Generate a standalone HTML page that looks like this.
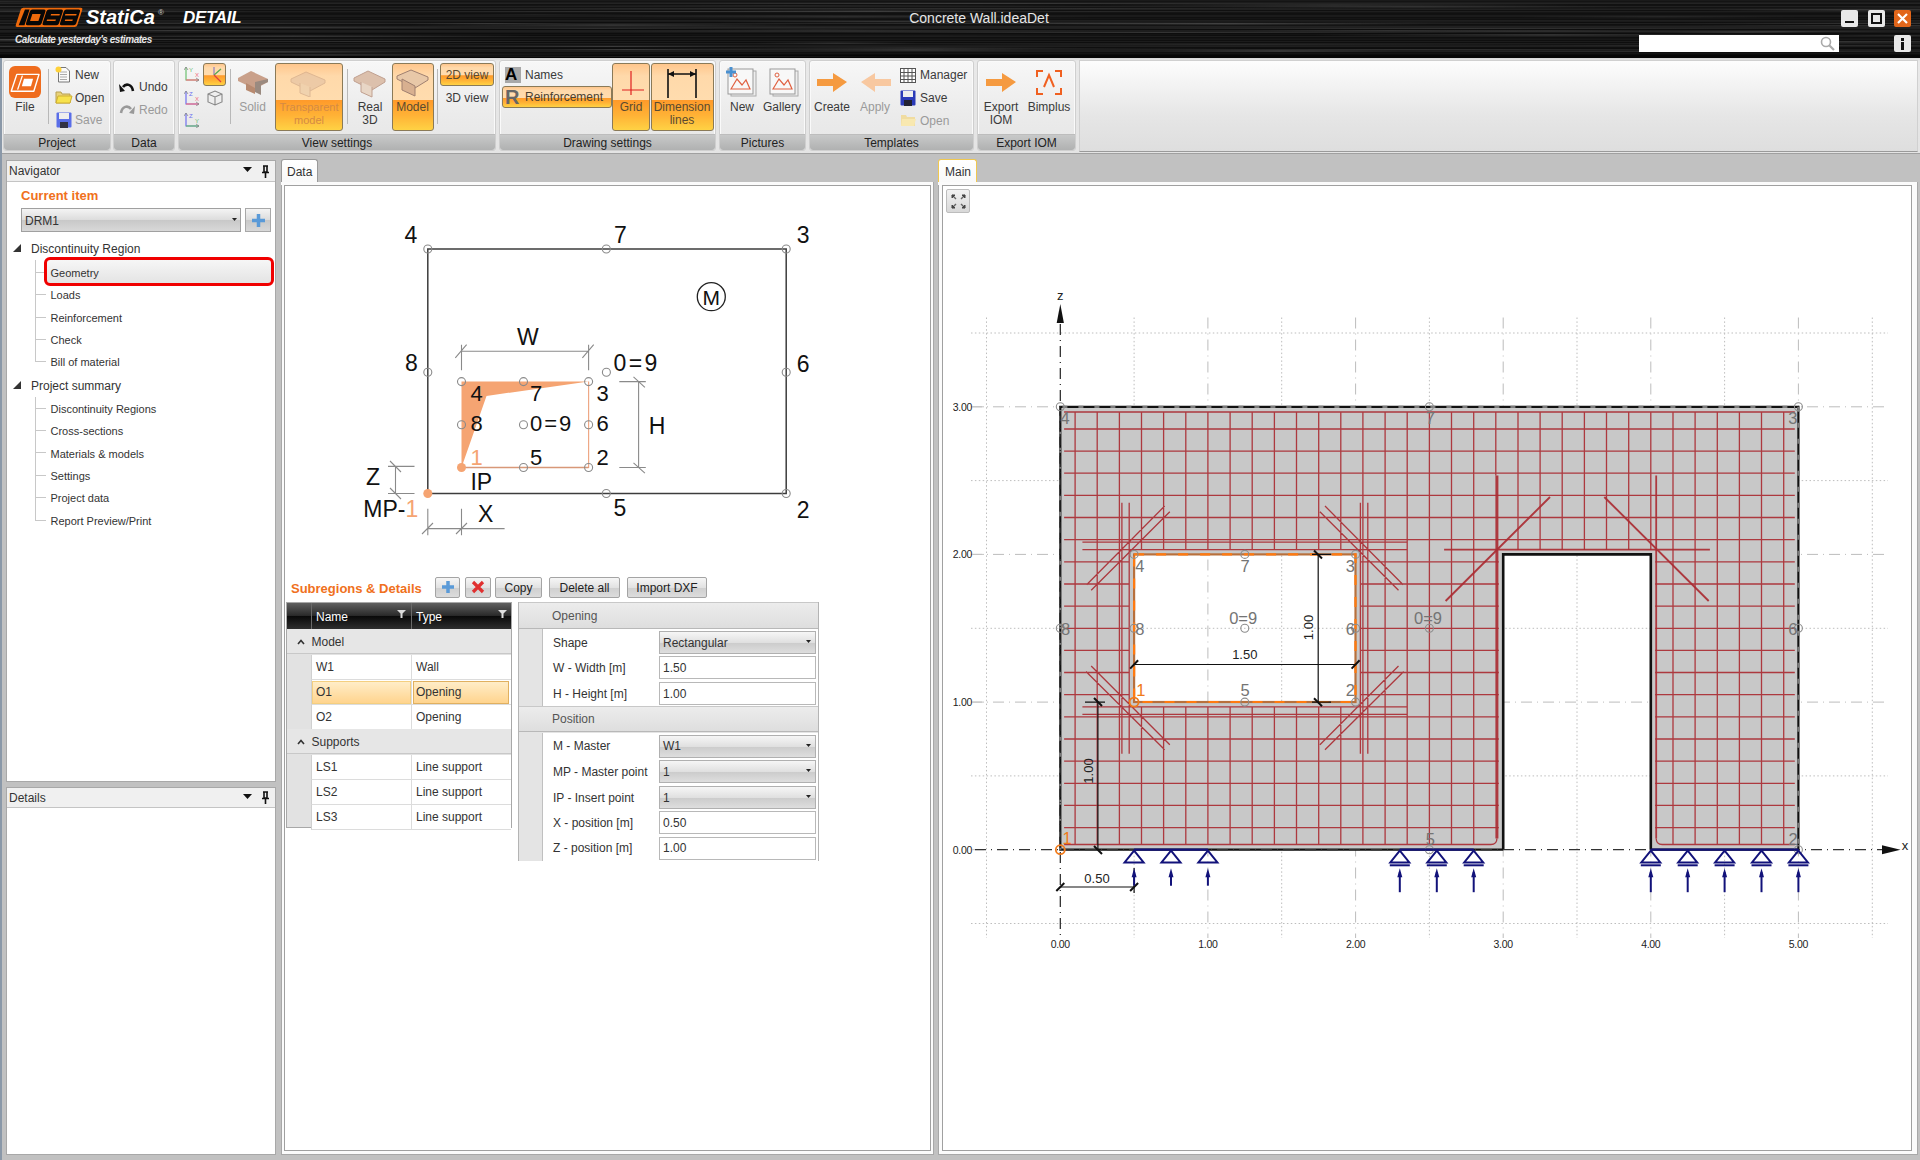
<!DOCTYPE html>
<html><head><meta charset="utf-8">
<style>
*{margin:0;padding:0;box-sizing:border-box}
html,body{width:1920px;height:1160px;overflow:hidden;background:#c1c1c1;font-family:"Liberation Sans",sans-serif;color:#1e1e1e}
.a{position:absolute}
.t{position:absolute;white-space:nowrap;line-height:1}
#title{left:0;top:0;width:1920px;height:58px;background:#070707;overflow:hidden}
#ribbon{left:0;top:58px;width:1920px;height:96px;background:linear-gradient(#d6d6d6,#e9e9e9 3px,#e4e4e4);border-bottom:1px solid #a0a0a0}
.grp{position:absolute;top:60px;height:91px;background:linear-gradient(#f7f7f7,#ebebeb 60%,#e6e6e6);border:1px solid #cfcfcf;border-radius:3px;box-shadow:inset 0 0 0 1px #fafafa}
.glab{position:absolute;left:0;right:0;bottom:0;height:16px;background:linear-gradient(#c8c9c9,#b0b1b1);border-top:1px solid #bdbdbd;font-size:12px;text-align:center;line-height:16px;color:#222;border-radius:0 0 3px 3px}
.obtn{position:absolute;background:linear-gradient(#ffc68c 0%,#ffd9aa 18%,#ffdcae 54%,#ff9a2a 55%,#ffb236 78%,#ffd244 100%);border:1px solid #8a7a58;border-radius:3px}
.rt{font-size:12px;color:#1e1e1e}
.gr{color:#9a9a9a}
.sep{position:absolute;width:1px;background:#b8b8b8}
.panel{position:absolute;background:#fff;border:1px solid #9c9c9c}
.phdr{position:absolute;background:#f0f0f0;border-bottom:1px solid #b5b5b5;font-size:12px}
</style></head><body>

<div id="title" class="a" style="background:linear-gradient(rgb(26,26,26) 0px 1px,rgb(20,20,20) 1px 2px,rgb(28,28,28) 2px 3px,rgb(36,36,36) 3px 4px,rgb(17,17,17) 4px 5px,rgb(18,18,18) 5px 6px,rgb(33,33,33) 6px 7px,rgb(19,19,19) 7px 8px,rgb(26,26,26) 8px 9px,rgb(33,33,33) 9px 10px,rgb(16,16,16) 10px 11px,rgb(31,31,31) 11px 12px,rgb(21,21,21) 12px 13px,rgb(16,16,16) 13px 14px,rgb(17,17,17) 14px 15px,rgb(27,27,27) 15px 16px,rgb(27,27,27) 16px 17px,rgb(16,16,16) 17px 18px,rgb(21,21,21) 18px 19px,rgb(16,16,16) 19px 20px,rgb(31,31,31) 20px 21px,rgb(27,27,27) 21px 22px,rgb(14,14,14) 22px 23px,rgb(31,31,31) 23px 24px,rgb(16,16,16) 24px 25px,rgb(20,20,20) 25px 26px,rgb(33,33,33) 26px 27px,rgb(33,33,33) 27px 28px,rgb(31,31,31) 28px 29px,rgb(13,13,13) 29px 30px,rgb(30,30,30) 30px 31px,rgb(30,30,30) 31px 32px,rgb(24,24,24) 32px 33px,rgb(13,13,13) 33px 34px,rgb(19,19,19) 34px 35px,rgb(13,13,13) 35px 36px,rgb(29,29,29) 36px 37px,rgb(15,15,15) 37px 38px,rgb(20,20,20) 38px 39px,rgb(24,24,24) 39px 40px,rgb(15,15,15) 40px 41px,rgb(28,28,28) 41px 42px,rgb(14,14,14) 42px 43px,rgb(29,29,29) 43px 44px,rgb(19,19,19) 44px 45px,rgb(27,27,27) 45px 46px,rgb(31,31,31) 46px 47px,rgb(15,15,15) 47px 48px,rgb(13,13,13) 48px 49px,rgb(28,28,28) 49px 50px,rgb(28,28,28) 50px 51px,rgb(29,29,29) 51px 52px,rgb(15,15,15) 52px 53px,rgb(20,20,20) 53px 54px,rgb(12,12,12) 54px 55px,rgb(6,6,6) 55px 56px,rgb(6,6,6) 56px 57px,rgb(6,6,6) 57px 58px)">
<div class="a" style="left:643px;top:3px;width:658px;height:1px;background:linear-gradient(90deg,rgba(255,255,255,0),rgba(255,255,255,0.10) 50%,rgba(255,255,255,0))"></div>
<div class="a" style="left:1086px;top:49px;width:626px;height:1px;background:linear-gradient(90deg,rgba(255,255,255,0),rgba(255,255,255,0.09) 50%,rgba(255,255,255,0))"></div>
<div class="a" style="left:1027px;top:23px;width:404px;height:2px;background:linear-gradient(90deg,rgba(255,255,255,0),rgba(255,255,255,0.11) 50%,rgba(255,255,255,0))"></div>
<div class="a" style="left:799px;top:49px;width:233px;height:2px;background:linear-gradient(90deg,rgba(255,255,255,0),rgba(255,255,255,0.09) 50%,rgba(255,255,255,0))"></div>
<div class="a" style="left:1206px;top:31px;width:609px;height:1px;background:linear-gradient(90deg,rgba(255,255,255,0),rgba(255,255,255,0.07) 50%,rgba(255,255,255,0))"></div>
<div class="a" style="left:1896px;top:7px;width:578px;height:1px;background:linear-gradient(90deg,rgba(255,255,255,0),rgba(255,255,255,0.05) 50%,rgba(255,255,255,0))"></div>
<div class="a" style="left:1802px;top:9px;width:581px;height:2px;background:linear-gradient(90deg,rgba(255,255,255,0),rgba(255,255,255,0.04) 50%,rgba(255,255,255,0))"></div>
<div class="a" style="left:1085px;top:4px;width:498px;height:2px;background:linear-gradient(90deg,rgba(255,255,255,0),rgba(255,255,255,0.10) 50%,rgba(255,255,255,0))"></div>
<div class="a" style="left:1668px;top:31px;width:220px;height:1px;background:linear-gradient(90deg,rgba(255,255,255,0),rgba(255,255,255,0.12) 50%,rgba(255,255,255,0))"></div>
<div class="a" style="left:66px;top:30px;width:212px;height:1px;background:linear-gradient(90deg,rgba(255,255,255,0),rgba(255,255,255,0.11) 50%,rgba(255,255,255,0))"></div>
<div class="a" style="left:1625px;top:41px;width:441px;height:2px;background:linear-gradient(90deg,rgba(255,255,255,0),rgba(255,255,255,0.10) 50%,rgba(255,255,255,0))"></div>
<div class="a" style="left:-108px;top:22px;width:622px;height:2px;background:linear-gradient(90deg,rgba(255,255,255,0),rgba(255,255,255,0.07) 50%,rgba(255,255,255,0))"></div>
<div class="a" style="left:1822px;top:7px;width:210px;height:1px;background:linear-gradient(90deg,rgba(255,255,255,0),rgba(255,255,255,0.06) 50%,rgba(255,255,255,0))"></div>
<div class="a" style="left:814px;top:8px;width:557px;height:1px;background:linear-gradient(90deg,rgba(255,255,255,0),rgba(255,255,255,0.08) 50%,rgba(255,255,255,0))"></div>
<div class="a" style="left:481px;top:5px;width:609px;height:1px;background:linear-gradient(90deg,rgba(255,255,255,0),rgba(255,255,255,0.08) 50%,rgba(255,255,255,0))"></div>
<div class="a" style="left:360px;top:56px;width:590px;height:1px;background:linear-gradient(90deg,rgba(255,255,255,0),rgba(255,255,255,0.12) 50%,rgba(255,255,255,0))"></div>
<div class="a" style="left:1501px;top:45px;width:517px;height:1px;background:linear-gradient(90deg,rgba(255,255,255,0),rgba(255,255,255,0.10) 50%,rgba(255,255,255,0))"></div>
<div class="a" style="left:418px;top:14px;width:234px;height:1px;background:linear-gradient(90deg,rgba(255,255,255,0),rgba(255,255,255,0.06) 50%,rgba(255,255,255,0))"></div>
<div class="a" style="left:755px;top:42px;width:162px;height:2px;background:linear-gradient(90deg,rgba(255,255,255,0),rgba(255,255,255,0.08) 50%,rgba(255,255,255,0))"></div>
<div class="a" style="left:876px;top:11px;width:438px;height:1px;background:linear-gradient(90deg,rgba(255,255,255,0),rgba(255,255,255,0.04) 50%,rgba(255,255,255,0))"></div>
<div class="a" style="left:1312px;top:34px;width:476px;height:2px;background:linear-gradient(90deg,rgba(255,255,255,0),rgba(255,255,255,0.13) 50%,rgba(255,255,255,0))"></div>
<div class="a" style="left:21px;top:54px;width:617px;height:2px;background:linear-gradient(90deg,rgba(255,255,255,0),rgba(255,255,255,0.12) 50%,rgba(255,255,255,0))"></div>
<div class="a" style="left:1407px;top:51px;width:557px;height:1px;background:linear-gradient(90deg,rgba(255,255,255,0),rgba(255,255,255,0.08) 50%,rgba(255,255,255,0))"></div>
<div class="a" style="left:1440px;top:30px;width:213px;height:1px;background:linear-gradient(90deg,rgba(255,255,255,0),rgba(255,255,255,0.06) 50%,rgba(255,255,255,0))"></div>
<div class="a" style="left:464px;top:28px;width:262px;height:1px;background:linear-gradient(90deg,rgba(255,255,255,0),rgba(255,255,255,0.07) 50%,rgba(255,255,255,0))"></div>
<div class="a" style="left:-200px;top:6px;width:304px;height:1px;background:linear-gradient(90deg,rgba(255,255,255,0),rgba(255,255,255,0.09) 50%,rgba(255,255,255,0))"></div>
<div class="a" style="left:-96px;top:39px;width:222px;height:2px;background:linear-gradient(90deg,rgba(255,255,255,0),rgba(255,255,255,0.12) 50%,rgba(255,255,255,0))"></div>
<div class="a" style="left:408px;top:24px;width:408px;height:2px;background:linear-gradient(90deg,rgba(255,255,255,0),rgba(255,255,255,0.13) 50%,rgba(255,255,255,0))"></div>
<div class="a" style="left:1742px;top:23px;width:275px;height:1px;background:linear-gradient(90deg,rgba(255,255,255,0),rgba(255,255,255,0.05) 50%,rgba(255,255,255,0))"></div>
<div class="a" style="left:1767px;top:29px;width:645px;height:1px;background:linear-gradient(90deg,rgba(255,255,255,0),rgba(255,255,255,0.07) 50%,rgba(255,255,255,0))"></div>
<div class="a" style="left:1203px;top:6px;width:421px;height:2px;background:linear-gradient(90deg,rgba(255,255,255,0),rgba(255,255,255,0.08) 50%,rgba(255,255,255,0))"></div>
<div class="a" style="left:-106px;top:10px;width:360px;height:2px;background:linear-gradient(90deg,rgba(255,255,255,0),rgba(255,255,255,0.13) 50%,rgba(255,255,255,0))"></div>
<div class="a" style="left:400px;top:23px;width:177px;height:1px;background:linear-gradient(90deg,rgba(255,255,255,0),rgba(255,255,255,0.11) 50%,rgba(255,255,255,0))"></div>
<div class="a" style="left:172px;top:41px;width:417px;height:1px;background:linear-gradient(90deg,rgba(255,255,255,0),rgba(255,255,255,0.09) 50%,rgba(255,255,255,0))"></div>
<div class="a" style="left:712px;top:22px;width:695px;height:2px;background:linear-gradient(90deg,rgba(255,255,255,0),rgba(255,255,255,0.09) 50%,rgba(255,255,255,0))"></div>
<div class="a" style="left:713px;top:21px;width:349px;height:1px;background:linear-gradient(90deg,rgba(255,255,255,0),rgba(255,255,255,0.11) 50%,rgba(255,255,255,0))"></div>
<div class="a" style="left:728px;top:47px;width:354px;height:1px;background:linear-gradient(90deg,rgba(255,255,255,0),rgba(255,255,255,0.09) 50%,rgba(255,255,255,0))"></div>
<div class="a" style="left:-82px;top:46px;width:178px;height:1px;background:linear-gradient(90deg,rgba(255,255,255,0),rgba(255,255,255,0.11) 50%,rgba(255,255,255,0))"></div>
<div class="a" style="left:593px;top:16px;width:502px;height:2px;background:linear-gradient(90deg,rgba(255,255,255,0),rgba(255,255,255,0.08) 50%,rgba(255,255,255,0))"></div>
<div class="a" style="left:1293px;top:22px;width:232px;height:1px;background:linear-gradient(90deg,rgba(255,255,255,0),rgba(255,255,255,0.06) 50%,rgba(255,255,255,0))"></div>
<div class="a" style="left:605px;top:30px;width:495px;height:2px;background:linear-gradient(90deg,rgba(255,255,255,0),rgba(255,255,255,0.06) 50%,rgba(255,255,255,0))"></div>
<div class="a" style="left:-193px;top:39px;width:640px;height:1px;background:linear-gradient(90deg,rgba(255,255,255,0),rgba(255,255,255,0.12) 50%,rgba(255,255,255,0))"></div>
<div class="a" style="left:147px;top:51px;width:272px;height:2px;background:linear-gradient(90deg,rgba(255,255,255,0),rgba(255,255,255,0.12) 50%,rgba(255,255,255,0))"></div>
<div class="a" style="left:616px;top:48px;width:639px;height:1px;background:linear-gradient(90deg,rgba(255,255,255,0),rgba(255,255,255,0.12) 50%,rgba(255,255,255,0))"></div>
<div class="a" style="left:1161px;top:50px;width:238px;height:2px;background:linear-gradient(90deg,rgba(255,255,255,0),rgba(255,255,255,0.11) 50%,rgba(255,255,255,0))"></div>
<div class="a" style="left:1697px;top:25px;width:561px;height:1px;background:linear-gradient(90deg,rgba(255,255,255,0),rgba(255,255,255,0.11) 50%,rgba(255,255,255,0))"></div>
<div class="a" style="left:450px;top:46px;width:324px;height:1px;background:linear-gradient(90deg,rgba(255,255,255,0),rgba(255,255,255,0.13) 50%,rgba(255,255,255,0))"></div>
<div class="a" style="left:1706px;top:9px;width:299px;height:2px;background:linear-gradient(90deg,rgba(255,255,255,0),rgba(255,255,255,0.10) 50%,rgba(255,255,255,0))"></div>
<div class="a" style="left:1235px;top:30px;width:309px;height:1px;background:linear-gradient(90deg,rgba(255,255,255,0),rgba(255,255,255,0.09) 50%,rgba(255,255,255,0))"></div>
<div class="a" style="left:-142px;top:1px;width:255px;height:1px;background:linear-gradient(90deg,rgba(255,255,255,0),rgba(255,255,255,0.09) 50%,rgba(255,255,255,0))"></div>
<div class="a" style="left:597px;top:27px;width:366px;height:1px;background:linear-gradient(90deg,rgba(255,255,255,0),rgba(255,255,255,0.04) 50%,rgba(255,255,255,0))"></div>
<div class="a" style="left:1852px;top:18px;width:396px;height:1px;background:linear-gradient(90deg,rgba(255,255,255,0),rgba(255,255,255,0.11) 50%,rgba(255,255,255,0))"></div>
<div class="a" style="left:1516px;top:16px;width:284px;height:2px;background:linear-gradient(90deg,rgba(255,255,255,0),rgba(255,255,255,0.05) 50%,rgba(255,255,255,0))"></div>
<div class="a" style="left:1676px;top:22px;width:679px;height:2px;background:linear-gradient(90deg,rgba(255,255,255,0),rgba(255,255,255,0.08) 50%,rgba(255,255,255,0))"></div>
<div class="a" style="left:421px;top:8px;width:686px;height:1px;background:linear-gradient(90deg,rgba(255,255,255,0),rgba(255,255,255,0.09) 50%,rgba(255,255,255,0))"></div>
<div class="a" style="left:550px;top:49px;width:154px;height:1px;background:linear-gradient(90deg,rgba(255,255,255,0),rgba(255,255,255,0.11) 50%,rgba(255,255,255,0))"></div>
<div class="a" style="left:379px;top:11px;width:634px;height:1px;background:linear-gradient(90deg,rgba(255,255,255,0),rgba(255,255,255,0.10) 50%,rgba(255,255,255,0))"></div>
<div class="a" style="left:52px;top:35px;width:483px;height:2px;background:linear-gradient(90deg,rgba(255,255,255,0),rgba(255,255,255,0.10) 50%,rgba(255,255,255,0))"></div>
<div class="a" style="left:1776px;top:35px;width:258px;height:1px;background:linear-gradient(90deg,rgba(255,255,255,0),rgba(255,255,255,0.12) 50%,rgba(255,255,255,0))"></div>
<div class="a" style="left:583px;top:15px;width:433px;height:1px;background:linear-gradient(90deg,rgba(255,255,255,0),rgba(255,255,255,0.04) 50%,rgba(255,255,255,0))"></div>
<div class="a" style="left:1652px;top:32px;width:178px;height:1px;background:linear-gradient(90deg,rgba(255,255,255,0),rgba(255,255,255,0.11) 50%,rgba(255,255,255,0))"></div>
<div class="a" style="left:1133px;top:28px;width:667px;height:1px;background:linear-gradient(90deg,rgba(255,255,255,0),rgba(255,255,255,0.09) 50%,rgba(255,255,255,0))"></div>
<div class="a" style="left:935px;top:44px;width:613px;height:1px;background:linear-gradient(90deg,rgba(255,255,255,0),rgba(255,255,255,0.09) 50%,rgba(255,255,255,0))"></div>
<div class="a" style="left:814px;top:32px;width:685px;height:1px;background:linear-gradient(90deg,rgba(255,255,255,0),rgba(255,255,255,0.12) 50%,rgba(255,255,255,0))"></div>
<div class="a" style="left:629px;top:35px;width:608px;height:1px;background:linear-gradient(90deg,rgba(255,255,255,0),rgba(255,255,255,0.05) 50%,rgba(255,255,255,0))"></div>
<div class="a" style="left:1610px;top:25px;width:473px;height:1px;background:linear-gradient(90deg,rgba(255,255,255,0),rgba(255,255,255,0.05) 50%,rgba(255,255,255,0))"></div>
<div class="a" style="left:99px;top:27px;width:367px;height:1px;background:linear-gradient(90deg,rgba(255,255,255,0),rgba(255,255,255,0.10) 50%,rgba(255,255,255,0))"></div>
<div class="a" style="left:432px;top:49px;width:524px;height:1px;background:linear-gradient(90deg,rgba(255,255,255,0),rgba(255,255,255,0.05) 50%,rgba(255,255,255,0))"></div>
<div class="a" style="left:699px;top:29px;width:246px;height:1px;background:linear-gradient(90deg,rgba(255,255,255,0),rgba(255,255,255,0.08) 50%,rgba(255,255,255,0))"></div>
<div class="a" style="left:716px;top:10px;width:315px;height:2px;background:linear-gradient(90deg,rgba(255,255,255,0),rgba(255,255,255,0.10) 50%,rgba(255,255,255,0))"></div>
<svg class="a" style="left:15px;top:7px" width="72" height="21"><g transform="skewX(-18)"><rect x="6.6" y="0.8" width="61.6" height="19.2" rx="2" fill="#ee6a0c"/><path d="M10.8 2.6H15.4V18.2H9.6Z" fill="#070707"/><rect x="16.3" y="2.6" width="15.6" height="15.6" rx="2" fill="#070707"/><rect x="19.6" y="7" width="8.4" height="7" fill="#ee6a0c"/><rect x="32.9" y="2.6" width="16.4" height="15.6" rx="2" fill="#070707"/><rect x="38.4" y="7.1" width="8.8" height="1.5" fill="#ee6a0c"/><rect x="36.2" y="12.6" width="8.8" height="1.5" fill="#ee6a0c"/><rect x="50.3" y="2.6" width="16.2" height="15.6" rx="2" fill="#070707"/><rect x="52.6" y="6.9" width="11.3" height="1.5" fill="#ee6a0c"/><rect x="54.3" y="12.5" width="7.6" height="1.5" fill="#ee6a0c"/></g></svg>
<div class="t" style="left:86px;top:7.3px;font-size:20px;color:#fff;font-weight:bold;font-style:italic;letter-spacing:0px">StatiCa</div>
<div class="t" style="left:158px;top:9.3px;font-size:8px;color:#ccc;">®</div>
<div class="t" style="left:183px;top:9.3px;font-size:17px;color:#fff;font-style:italic;font-weight:bold;letter-spacing:-0.3px">DETAIL</div>
<div class="t" style="left:15px;top:35.3px;font-size:10px;color:#e8e8e8;font-weight:bold;font-style:italic;letter-spacing:-0.45px">Calculate yesterday's estimates</div>
<div class="t" style="left:979px;top:11.3px;font-size:14px;color:#e6e6e6;transform:translateX(-50%);">Concrete Wall.ideaDet</div>
<div class="a" style="left:1841px;top:10px;width:17px;height:17px;background:#e8e8e8;border-radius:2px"><div class="a" style="left:4px;top:11px;width:9px;height:2px;background:#111"></div></div>
<div class="a" style="left:1868px;top:10px;width:17px;height:17px;background:#e8e8e8;border-radius:2px"><div class="a" style="left:3px;top:3px;width:11px;height:11px;border:2px solid #111"></div></div>
<div class="a" style="left:1894px;top:10px;width:17px;height:17px;background:#e2661a;border-radius:2px"><svg class="a" style="left:3px;top:3px" width="11" height="11"><path d="M1 1L10 10M10 1L1 10" stroke="#fff" stroke-width="2.2"/></svg></div>
<div class="a" style="left:1639px;top:35px;width:200px;height:17px;background:#fff"><svg class="a" style="left:181px;top:1px" width="16" height="15"><circle cx="6" cy="6" r="4.5" fill="none" stroke="#aaa" stroke-width="1.6"/><path d="M9 9L14 14" stroke="#aaa" stroke-width="2.2"/></svg></div>
<div class="a" style="left:1894px;top:35px;width:17px;height:17px;background:#e8e8e8;border-radius:2px"><div class="a" style="left:7px;top:3px;width:3px;height:3px;background:#111"></div><div class="a" style="left:7px;top:7px;width:3px;height:8px;background:#111"></div></div>
</div>
<div id="ribbon" class="a"></div>
<div class="grp" style="left:3px;width:108px"><div class="glab">Project</div></div>
<div class="grp" style="left:113px;width:62px"><div class="glab">Data</div></div>
<div class="grp" style="left:178px;width:318px"><div class="glab">View settings</div></div>
<div class="grp" style="left:499px;width:217px"><div class="glab">Drawing settings</div></div>
<div class="grp" style="left:719px;width:87px"><div class="glab">Pictures</div></div>
<div class="grp" style="left:809px;width:165px"><div class="glab">Templates</div></div>
<div class="grp" style="left:977px;width:99px"><div class="glab">Export IOM</div></div>
<div class="a" style="left:1079px;top:60px;width:839px;height:92px;background:linear-gradient(#fdfdfd,#e6e6e6 60%,#dedede);border:1px solid #d0d0d0;border-bottom:1px solid #9a9a9a"></div>
<div class="a" style="left:9px;top:66px;width:32px;height:32px;background:#ef6c1e;border-radius:6px"><svg class="a" style="left:0;top:0" width="32" height="32"><path d="M2.2 25.2L7.8 8.4H30L24.8 25.2Z" fill="none" stroke="#fff" stroke-width="1.4" stroke-linejoin="round"/><path d="M8.6 23.6L13.4 9.6" stroke="#fff" stroke-width="1.3"/><path d="M15 12.7H24.1L22 20.2H12.8Z" fill="#fff"/></svg></div>
<div class="t" style="left:25px;top:101.3px;font-size:12px;color:#3a3a3a;transform:translateX(-50%);">File</div>
<div class="sep" style="left:48px;top:69px;height:55px"></div>
<svg class="a" style="left:55px;top:66px" width="16" height="17"><path d="M3.5 1.5H11L14.5 5V16H3.5Z" fill="#fafafa" stroke="#777"/><path d="M5 6H12M5 8.5H12M5 11H12M5 13.5H12" stroke="#aaa"/><circle cx="3.5" cy="3.5" r="3" fill="#ffd23a"/></svg>
<div class="t" style="left:75px;top:69.3px;font-size:12px;color:#3a3a3a;">New</div>
<svg class="a" style="left:55px;top:89px" width="18" height="16"><path d="M1 3H6L7 5H15V14H1Z" fill="#e9d27a" stroke="#b8a050"/><path d="M3 7H17L15 14H1Z" fill="#f7e24c" stroke="#d0b030"/></svg>
<div class="t" style="left:75px;top:91.8px;font-size:12px;color:#3a3a3a;">Open</div>
<svg class="a" style="left:56px;top:112px" width="16" height="16"><rect x="0.5" y="0.5" width="15" height="15" rx="1" fill="#5a6ee8"/><rect x="3" y="1" width="10" height="6" fill="#eee"/><rect x="4" y="10" width="8" height="6" fill="#334"/></svg>
<div class="t" style="left:75px;top:114.3px;font-size:12px;color:#9a9a9a;">Save</div>
<svg class="a" style="left:119px;top:81px" width="16" height="12"><path d="M14 10 C13 3 7 2 4 6" fill="none" stroke="#111" stroke-width="2.6"/><path d="M0 3 L6 10 L1 11Z" fill="#111"/></svg>
<div class="t" style="left:139px;top:81.3px;font-size:12px;color:#3a3a3a;">Undo</div>
<svg class="a" style="left:119px;top:103px" width="16" height="12"><path d="M2 10 C3 3 9 2 12 6" fill="none" stroke="#999" stroke-width="2.6"/><path d="M16 3 L10 10 L15 11Z" fill="#999"/></svg>
<div class="t" style="left:139px;top:103.8px;font-size:12px;color:#9a9a9a;">Redo</div>
<svg class="a" style="left:184px;top:66px" width="16" height="16"><path d="M2 1V14H15" fill="none" stroke="#6cc070" stroke-width="1.2"/><path d="M2 14H15" stroke="#f07080" stroke-width="1.2"/><path d="M0 4L2 1L4 4M12 12L15 14L12 16" fill="none" stroke="#888" stroke-width="0.8"/><text x="5" y="6" font-size="6" fill="#6cc070" font-family="Liberation Sans">Y</text><text x="11" y="11" font-size="6" fill="#f07080" font-family="Liberation Sans">X</text></svg>
<svg class="a" style="left:184px;top:90px" width="16" height="16"><path d="M2 1V14H15" fill="none" stroke="#7070f0" stroke-width="1.2"/><path d="M2 14H15" stroke="#f07080" stroke-width="1.2"/><path d="M0 4L2 1L4 4M12 12L15 14L12 16" fill="none" stroke="#888" stroke-width="0.8"/><text x="5" y="6" font-size="6" fill="#7070f0" font-family="Liberation Sans">Z</text><text x="11" y="11" font-size="6" fill="#f07080" font-family="Liberation Sans">X</text></svg>
<svg class="a" style="left:184px;top:112px" width="16" height="16"><path d="M2 1V14H15" fill="none" stroke="#7070f0" stroke-width="1.2"/><path d="M2 14H15" stroke="#6cc070" stroke-width="1.2"/><path d="M0 4L2 1L4 4M12 12L15 14L12 16" fill="none" stroke="#888" stroke-width="0.8"/><text x="5" y="6" font-size="6" fill="#7070f0" font-family="Liberation Sans">Z</text><text x="11" y="11" font-size="6" fill="#6cc070" font-family="Liberation Sans">Y</text></svg>
<div class="obtn" style="left:203px;top:63px;width:23px;height:23px"></div>
<svg class="a" style="left:204px;top:64px" width="22" height="22"><path d="M10 3V11L17 5" fill="none" stroke="#7c6cc0" stroke-width="1"/><path d="M10 11L17 5" stroke="#60b050" stroke-width="1.2"/><path d="M10 11L17 18" stroke="#e04040" stroke-width="1.2"/></svg>
<svg class="a" style="left:206px;top:89px" width="18" height="18"><path d="M2 5L9 2L16 5V13L9 16L2 13Z M2 5L9 8L16 5 M9 8V16" fill="none" stroke="#888" stroke-width="1.1"/></svg>
<div class="sep" style="left:230px;top:69px;height:55px"></div>
<svg class="a" style="left:237px;top:70px" width="32" height="26"><path d="M1 8L14 1L31 9L31 12L18 19L1 11Z" fill="#c9a08a"/><path d="M18 12L31 9V12L24 15V25L18 22V19" fill="#9a8a80"/><path d="M9 13L18 18V24L9 20Z" fill="#b88a70"/></svg>
<div class="t" style="left:252.5px;top:101.3px;font-size:12px;color:#9a9a9a;transform:translateX(-50%);">Solid</div>
<div class="obtn" style="left:275px;top:63px;width:68px;height:68px"></div>
<svg class="a" style="left:290px;top:71px" width="36" height="26" opacity="0.45"><path d="M1 8L16 1L35 9V12L20 20L1 11Z" fill="#d8b8a0" stroke="#b89078"/><path d="M10 12V22L20 26V16" fill="#e0c8b0" stroke="#b89078"/></svg>
<div class="t" style="left:309px;top:101.8px;font-size:11px;color:#d48a44;transform:translateX(-50%);">Transparent</div>
<div class="t" style="left:309px;top:114.8px;font-size:11px;color:#d48a44;transform:translateX(-50%);">model</div>
<div class="sep" style="left:347px;top:69px;height:55px"></div>
<svg class="a" style="left:353px;top:70px" width="33" height="28"><path d="M1 8L15 1L32 9V12L19 20L1 11Z" fill="#dcc0ac" stroke="#c0a090"/><path d="M8 12V22L19 27V17" fill="#e8d6c6" stroke="#c0a090"/></svg>
<div class="t" style="left:370px;top:101.3px;font-size:12px;color:#3a3a3a;transform:translateX(-50%);">Real</div>
<div class="t" style="left:370px;top:114.3px;font-size:12px;color:#3a3a3a;transform:translateX(-50%);">3D</div>
<div class="obtn" style="left:392px;top:63px;width:42px;height:68px"></div>
<svg class="a" style="left:396px;top:69px" width="34" height="28"><path d="M1 7L15 1L32 8V11L19 19L1 10Z" fill="#e8c8a8" stroke="#a08070"/><path d="M6 10V21L19 27V17Z" fill="#d8b090" stroke="#a08070"/></svg>
<div class="t" style="left:412.5px;top:101.3px;font-size:12px;color:#5a4a30;transform:translateX(-50%);">Model</div>
<div class="sep" style="left:437px;top:69px;height:55px"></div>
<div class="obtn" style="left:440px;top:63px;width:54px;height:23px"></div>
<div class="t" style="left:467px;top:69.3px;font-size:12px;color:#5a4a30;transform:translateX(-50%);">2D view</div>
<div class="t" style="left:467px;top:92.3px;font-size:12px;color:#3a3a3a;transform:translateX(-50%);">3D view</div>
<div class="a" style="left:505px;top:67px;width:16px;height:16px;background:#a8a8a8"><div class="t" style="left:0px;top:-1px;font-size:17px;font-weight:bold;color:#000;letter-spacing:-1px">A</div></div>
<div class="t" style="left:525px;top:69.3px;font-size:12px;color:#3a3a3a;">Names</div>
<div class="obtn" style="left:502px;top:86px;width:110px;height:22px"></div>
<div class="t" style="left:505px;top:87px;font-size:20px;font-weight:bold;color:#666">R</div>
<div class="t" style="left:525px;top:91.3px;font-size:12px;color:#4a4030;">Reinforcement</div>
<div class="obtn" style="left:612px;top:63px;width:38px;height:68px"></div>
<svg class="a" style="left:620px;top:70px" width="24" height="26"><path d="M11 1V25M2 20H24" stroke="#e02020" stroke-width="1.2"/></svg>
<div class="t" style="left:631px;top:101.3px;font-size:12px;color:#5a4a30;transform:translateX(-50%);">Grid</div>
<div class="obtn" style="left:651px;top:63px;width:63px;height:68px"></div>
<svg class="a" style="left:664px;top:68px" width="36" height="32"><path d="M4 1V30M32 1V30M4 6H32" stroke="#111" stroke-width="1.6"/><path d="M4 6L10 3V9Z M32 6L26 3V9Z" fill="#111"/></svg>
<div class="t" style="left:682px;top:101.3px;font-size:12px;color:#5a4a30;transform:translateX(-50%);">Dimension</div>
<div class="t" style="left:682px;top:114.3px;font-size:12px;color:#5a4a30;transform:translateX(-50%);">lines</div>
<svg class="a" style="left:725px;top:67px" width="32" height="30"><rect x="6" y="4" width="25" height="25" fill="#eee" stroke="#aaa"/><rect x="3" y="2" width="25" height="25" fill="#f8f8f8" stroke="#999"/><path d="M6 22L12 12L17 18L21 13L25 22Z" fill="none" stroke="#e06040" stroke-width="1.2"/><circle cx="10" cy="8" r="2" fill="none" stroke="#e06040"/><path d="M6 0V10M1 5H11" stroke="#4a90d0" stroke-width="3"/></svg>
<div class="t" style="left:742px;top:101.3px;font-size:12px;color:#3a3a3a;transform:translateX(-50%);">New</div>
<svg class="a" style="left:767px;top:67px" width="32" height="30"><rect x="6" y="4" width="25" height="25" fill="#eee" stroke="#aaa"/><rect x="3" y="2" width="25" height="25" fill="#f8f8f8" stroke="#999"/><path d="M6 22L12 12L17 18L21 13L25 22Z" fill="none" stroke="#e06040" stroke-width="1.2"/><circle cx="10" cy="8" r="2" fill="none" stroke="#e06040"/></svg>
<div class="t" style="left:782px;top:101.3px;font-size:12px;color:#3a3a3a;transform:translateX(-50%);">Gallery</div>
<svg class="a" style="left:816px;top:72px" width="32" height="21"><path d="M1 7H17V1L31 10L17 20V14H1Z" fill="#f59a40"/></svg>
<div class="t" style="left:832px;top:101.3px;font-size:12px;color:#3a3a3a;transform:translateX(-50%);">Create</div>
<svg class="a" style="left:860px;top:72px" width="32" height="21"><path d="M31 7H15V1L1 10L15 20V14H31Z" fill="#f8c8a0"/></svg>
<div class="t" style="left:875px;top:101.3px;font-size:12px;color:#9a9a9a;transform:translateX(-50%);">Apply</div>
<svg class="a" style="left:900px;top:68px" width="16" height="15"><rect x="0.5" y="0.5" width="15" height="14" fill="#fff" stroke="#555"/><path d="M0 4.5H16M0 8H16M0 11.5H16M4 0V15M8 0V15M12 0V15" stroke="#555"/></svg>
<div class="t" style="left:920px;top:69.3px;font-size:12px;color:#3a3a3a;">Manager</div>
<svg class="a" style="left:900px;top:90px" width="16" height="16"><rect x="0.5" y="0.5" width="15" height="15" rx="1" fill="#2a3ab8"/><rect x="3" y="1" width="10" height="6" fill="#eee"/><rect x="4" y="10" width="8" height="6" fill="#223"/></svg>
<div class="t" style="left:920px;top:92.3px;font-size:12px;color:#3a3a3a;">Save</div>
<svg class="a" style="left:900px;top:113px" width="17" height="14"><path d="M1 2H6L7 4H15V13H1Z" fill="#f0dca0"/><path d="M2 6H16L14 13H1Z" fill="#f8e8b0"/></svg>
<div class="t" style="left:920px;top:114.8px;font-size:12px;color:#9a9a9a;">Open</div>
<svg class="a" style="left:985px;top:72px" width="32" height="21"><path d="M1 7H17V1L31 10L17 20V14H1Z" fill="#f59a40"/></svg>
<div class="t" style="left:1001px;top:101.3px;font-size:12px;color:#3a3a3a;transform:translateX(-50%);">Export</div>
<div class="t" style="left:1001px;top:114.3px;font-size:12px;color:#3a3a3a;transform:translateX(-50%);">IOM</div>
<svg class="a" style="left:1036px;top:70px" width="26" height="25"><path d="M1 7V1H7M19 1H25V7M25 18V24H19M7 24H1V18" fill="none" stroke="#f06020" stroke-width="2"/><path d="M8 17L13 5L18 17" fill="none" stroke="#f06020" stroke-width="2"/></svg>
<div class="t" style="left:1049px;top:101.3px;font-size:12px;color:#3a3a3a;transform:translateX(-50%);">Bimplus</div>
<div class="a" style="left:0;top:58px;width:2px;height:1102px;background:#8a98a8"></div>
<div class="a" style="left:6px;top:160px;width:270px;height:622px;background:#fff;border:1px solid #a8a8a8"></div>
<div class="a" style="left:7px;top:161px;width:268px;height:21px;background:#f0f0f0;border-bottom:1px solid #c4c4c4"></div>
<div class="t" style="left:9px;top:165.3px;font-size:12px;color:#333;">Navigator</div>
<svg class="a" style="left:243px;top:167px" width="9" height="6"><path d="M0 0H9L4.5 5Z" fill="#111"/></svg>
<svg class="a" style="left:261px;top:165px" width="9" height="13"><path d="M2 1H7M3 1V7H6V1M1 7.5H8M4.5 8V13" stroke="#111" stroke-width="1.6" fill="none"/></svg>
<div class="t" style="left:21px;top:189.3px;font-size:13px;color:#f07020;font-weight:bold">Current item</div>
<div class="a" style="left:21px;top:208px;width:220px;height:24px;border:1px solid #a0a0a0;background:linear-gradient(#f4f4f4,#dcdcdc 50%,#c8c8c8 51%,#d8d8d8)"></div>
<div class="t" style="left:25px;top:214.8px;font-size:12px;color:#333;">DRM1</div>
<svg class="a" style="left:232px;top:218px" width="5" height="4"><path d="M0 0H5L2.5 3Z" fill="#222"/></svg>
<div class="a" style="left:245px;top:208px;width:26px;height:24px;border:1px solid #a8a8a8;background:linear-gradient(#f4f4f4,#dcdcdc 50%,#c8c8c8 51%,#d8d8d8)"><svg class="a" style="left:5px;top:4px" width="15" height="15"><path d="M7.5 1V14M1 7.5H14" stroke="#5a9ad8" stroke-width="3.5"/></svg></div>
<svg class="a" style="left:13px;top:244px" width="9" height="9"><path d="M8 0V8H0Z" fill="#333"/></svg>
<div class="t" style="left:31px;top:243.3px;font-size:12px;color:#333;">Discontinuity Region</div>
<div class="a" style="left:35px;top:260px;width:0;height:102px;border-left:1px solid #c8c8c8"></div>
<div class="a" style="left:36px;top:272px;width:10px;height:0;border-top:1px solid #c8c8c8"></div>
<div class="a" style="left:36px;top:294px;width:10px;height:0;border-top:1px solid #c8c8c8"></div>
<div class="a" style="left:36px;top:317px;width:10px;height:0;border-top:1px solid #c8c8c8"></div>
<div class="a" style="left:36px;top:339px;width:10px;height:0;border-top:1px solid #c8c8c8"></div>
<div class="a" style="left:36px;top:361px;width:10px;height:0;border-top:1px solid #c8c8c8"></div>
<div class="a" style="left:44px;top:257px;width:230px;height:29px;border:3.5px solid #f00000;border-radius:6px;background:linear-gradient(#f6f6f6,#e4e4e4)"></div>
<div class="t" style="left:50.5px;top:267.8px;font-size:11px;color:#333;">Geometry</div>
<div class="t" style="left:50.5px;top:290.3px;font-size:11px;color:#333;">Loads</div>
<div class="t" style="left:50.5px;top:312.8px;font-size:11px;color:#333;">Reinforcement</div>
<div class="t" style="left:50.5px;top:334.8px;font-size:11px;color:#333;">Check</div>
<div class="t" style="left:50.5px;top:357.3px;font-size:11px;color:#333;">Bill of material</div>
<svg class="a" style="left:13px;top:380.5px" width="9" height="9"><path d="M8 0V8H0Z" fill="#333"/></svg>
<div class="t" style="left:31px;top:379.8px;font-size:12px;color:#333;">Project summary</div>
<div class="a" style="left:35px;top:397px;width:0;height:124px;border-left:1px solid #c8c8c8"></div>
<div class="a" style="left:36px;top:408px;width:10px;height:0;border-top:1px solid #c8c8c8"></div>
<div class="t" style="left:50.5px;top:403.8px;font-size:11px;color:#333;">Discontinuity Regions</div>
<div class="a" style="left:36px;top:430px;width:10px;height:0;border-top:1px solid #c8c8c8"></div>
<div class="t" style="left:50.5px;top:426.1px;font-size:11px;color:#333;">Cross-sections</div>
<div class="a" style="left:36px;top:452px;width:10px;height:0;border-top:1px solid #c8c8c8"></div>
<div class="t" style="left:50.5px;top:448.6px;font-size:11px;color:#333;">Materials &amp; models</div>
<div class="a" style="left:36px;top:475px;width:10px;height:0;border-top:1px solid #c8c8c8"></div>
<div class="t" style="left:50.5px;top:470.8px;font-size:11px;color:#333;">Settings</div>
<div class="a" style="left:36px;top:497px;width:10px;height:0;border-top:1px solid #c8c8c8"></div>
<div class="t" style="left:50.5px;top:493.2px;font-size:11px;color:#333;">Project data</div>
<div class="a" style="left:36px;top:520px;width:10px;height:0;border-top:1px solid #c8c8c8"></div>
<div class="t" style="left:50.5px;top:515.8px;font-size:11px;color:#333;">Report Preview/Print</div>
<div class="a" style="left:6px;top:787px;width:270px;height:368px;background:#fff;border:1px solid #a8a8a8"></div>
<div class="a" style="left:7px;top:788px;width:268px;height:20px;background:#f0f0f0;border-bottom:1px solid #c4c4c4"></div>
<div class="t" style="left:9px;top:791.8px;font-size:12px;color:#333;">Details</div>
<svg class="a" style="left:243px;top:794px" width="9" height="6"><path d="M0 0H9L4.5 5Z" fill="#111"/></svg>
<svg class="a" style="left:261px;top:791px" width="9" height="13"><path d="M2 1H7M3 1V7H6V1M1 7.5H8M4.5 8V13" stroke="#111" stroke-width="1.6" fill="none"/></svg>
<div class="a" style="left:281px;top:159px;width:37px;height:26px;background:linear-gradient(#fff,#f8f8f8);border:1px solid #9a9a9a;border-bottom:none;border-radius:3px 3px 0 0"></div>
<div class="t" style="left:287px;top:166.3px;font-size:12px;color:#333;">Data</div>
<div class="a" style="left:281px;top:182px;width:653px;height:973px;background:#fbfbfb;border:1px solid #a8a8a8;border-top:none"></div>
<div class="a" style="left:281px;top:182px;width:37px;height:3px;background:#fbfbfb"></div>
<div class="a" style="left:284px;top:185px;width:647px;height:966px;background:#fff;border:1px solid #a0a0a0"></div>
<div class="a" style="left:938px;top:159px;width:39px;height:26px;background:linear-gradient(#fff,#f8f8f8);border:1px solid #f0c850;border-bottom:none;border-radius:3px 3px 0 0"></div>
<div class="t" style="left:945px;top:166.3px;font-size:12px;color:#333;">Main</div>
<div class="a" style="left:938px;top:182px;width:980px;height:973px;background:#fbfbfb;border:1px solid #a8a8a8;border-top:none"></div>
<div class="a" style="left:938px;top:182px;width:39px;height:3px;background:#fbfbfb"></div>
<div class="a" style="left:942px;top:185px;width:970px;height:966px;background:#fff;border:1px solid #a0a0a0"></div>
<div class="a" style="left:946px;top:189px;width:24px;height:24px;background:linear-gradient(#f2f2f2,#d8d8d8);border:1px solid #bdbdbd;border-radius:2px"><svg class="a" style="left:4px;top:4px" width="15" height="15"><path d="M1 1L5 5M14 1L10 5M1 14L5 10M14 14L10 10" stroke="#666" stroke-width="1.4"/><path d="M1 1H4L1 4Z M14 1H11L14 4Z M1 14H4L1 11Z M14 14H11L14 11Z" fill="#444" stroke="#444"/></svg></div>
<svg class="a" style="left:0;top:0" width="934" height="560" font-family="Liberation Sans"><rect x="427.8" y="249" width="358.4" height="244.5" fill="none" stroke="#3c3c3c" stroke-width="1.5"/><path d="M461.5 351.3H588.6 M461.5 344.7V370.3 M588.6 344.7V370.3 M455.3 357.9L466.6 344.7 M582.4 357.9L593.7 344.7" stroke="#8a8a8a" stroke-width="1.1" fill="none"/><path d="M638.6 381.6V467.5 M619.3 381.6H645.8 M619.3 467.5H645.8 M633.5 376.9L644.9 387.3 M633.5 462.8L644.9 473.2" stroke="#8a8a8a" stroke-width="1.1" fill="none"/><path d="M395.5 466.4V493.5 M388 466.4H414.5 M388 493.5H414.5 M390 461L401 472 M390 488L401 499" stroke="#8a8a8a" stroke-width="1.1" fill="none"/><path d="M427.8 528.6H504.6 M427.8 508.7V535.3 M461.5 508.7V535.3 M422 534L433 523 M456 534L467 523" stroke="#8a8a8a" stroke-width="1.1" fill="none"/><path d="M461.5 381.6H588.6L486.5 395.9L461.5 467.5Z" fill="#f5a472"/><path d="M588.6 381.6V467.5H461.5" fill="none" stroke="#eea886" stroke-width="1.2"/><path d="M461.5 467.5H588.6" fill="none" stroke="#d89878" stroke-width="1.4"/><circle cx="427.8" cy="249" r="4" fill="none" stroke="#8a8a8a" stroke-width="1.1"/><circle cx="606.3" cy="249" r="4" fill="none" stroke="#8a8a8a" stroke-width="1.1"/><circle cx="786.2" cy="249" r="4" fill="none" stroke="#8a8a8a" stroke-width="1.1"/><circle cx="427.8" cy="372.2" r="4" fill="none" stroke="#8a8a8a" stroke-width="1.1"/><circle cx="786.2" cy="372.2" r="4" fill="none" stroke="#8a8a8a" stroke-width="1.1"/><circle cx="606.3" cy="493.5" r="4" fill="none" stroke="#8a8a8a" stroke-width="1.1"/><circle cx="786.2" cy="493.5" r="4" fill="none" stroke="#8a8a8a" stroke-width="1.1"/><circle cx="606.4" cy="372.2" r="4" fill="none" stroke="#8a8a8a" stroke-width="1.1"/><circle cx="461.5" cy="381.6" r="4" fill="none" stroke="#8a8a8a" stroke-width="1.1"/><circle cx="523.5" cy="381.6" r="4" fill="none" stroke="#8a8a8a" stroke-width="1.1"/><circle cx="588.6" cy="381.6" r="4" fill="none" stroke="#8a8a8a" stroke-width="1.1"/><circle cx="461.5" cy="424.7" r="4" fill="none" stroke="#8a8a8a" stroke-width="1.1"/><circle cx="523.5" cy="424.7" r="4" fill="none" stroke="#8a8a8a" stroke-width="1.1"/><circle cx="588.6" cy="424.7" r="4" fill="none" stroke="#8a8a8a" stroke-width="1.1"/><circle cx="523.5" cy="467.5" r="4" fill="none" stroke="#8a8a8a" stroke-width="1.1"/><circle cx="588.6" cy="467.5" r="4" fill="none" stroke="#8a8a8a" stroke-width="1.1"/><circle cx="427.8" cy="493.5" r="4.5" fill="#f5a472"/><circle cx="461.5" cy="467.5" r="4.5" fill="#f5a472"/><circle cx="711.3" cy="296.7" r="14" fill="none" stroke="#222" stroke-width="1.3"/><text x="711.3" y="304.5" font-size="21" fill="#111" text-anchor="middle" >M</text><text x="404.4" y="242.6" font-size="23" fill="#111" text-anchor="start" >4</text><text x="614" y="242.6" font-size="23" fill="#111" text-anchor="start" >7</text><text x="796.8" y="242.6" font-size="23" fill="#111" text-anchor="start" >3</text><text x="405" y="371.2" font-size="23" fill="#111" text-anchor="start" >8</text><text x="796.8" y="372" font-size="23" fill="#111" text-anchor="start" >6</text><text x="613.6" y="516.3" font-size="23" fill="#111" text-anchor="start" >5</text><text x="796.8" y="517.6" font-size="23" fill="#111" text-anchor="start" >2</text><text x="613.6" y="371.2" font-size="23" fill="#111" text-anchor="start" letter-spacing="2.3">0=9</text><text x="516.9" y="344.7" font-size="23" fill="#111" text-anchor="start" >W</text><text x="648.7" y="433.8" font-size="23" fill="#111" text-anchor="start" >H</text><text x="366.1" y="485" font-size="23" fill="#111" text-anchor="start" >Z</text><text x="363.3" y="517.2" font-size="23" fill="#111" text-anchor="start" >MP-<tspan fill="#f5a472">1</tspan></text><text x="478" y="522" font-size="23" fill="#111" text-anchor="start" >X</text><text x="470.4" y="489.7" font-size="23" fill="#111" text-anchor="start" >IP</text><text x="470.4" y="400.6" font-size="22" fill="#111" text-anchor="start" >4</text><text x="530" y="400.6" font-size="22" fill="#111" text-anchor="start" >7</text><text x="596.5" y="400.6" font-size="22" fill="#111" text-anchor="start" >3</text><text x="470.4" y="431" font-size="22" fill="#111" text-anchor="start" >8</text><text x="530" y="431" font-size="22" fill="#111" text-anchor="start" >0<tspan dx="2">=</tspan><tspan dx="2">9</tspan></text><text x="596.5" y="431" font-size="22" fill="#111" text-anchor="start" >6</text><text x="530" y="465" font-size="22" fill="#111" text-anchor="start" >5</text><text x="596.5" y="465" font-size="22" fill="#111" text-anchor="start" >2</text><text x="470.4" y="465" font-size="22" fill="#f5a472" text-anchor="start" >1</text></svg>
<div class="t" style="left:291px;top:582.3px;font-size:13px;color:#f07020;font-weight:bold">Subregions &amp; Details</div>
<div class="a" style="left:435px;top:577px;width:25px;height:21px;border:1px solid #a4a4a4;border-radius:2px;background:linear-gradient(#f6f6f6,#e2e2e2 50%,#cfcfcf 51%,#dcdcdc)"></div>
<svg class="a" style="left:441px;top:580px" width="14" height="14"><path d="M7 1V13M1 7H13" stroke="#5a9ad8" stroke-width="3.5"/></svg>
<div class="a" style="left:465px;top:577px;width:26px;height:21px;border:1px solid #a4a4a4;border-radius:2px;background:linear-gradient(#f6f6f6,#e2e2e2 50%,#cfcfcf 51%,#dcdcdc)"></div>
<svg class="a" style="left:471px;top:580px" width="14" height="14"><path d="M2 2L12 12M12 2L2 12" stroke="#e03030" stroke-width="3.2"/></svg>
<div class="a" style="left:495px;top:577px;width:47px;height:21px;border:1px solid #a4a4a4;border-radius:2px;background:linear-gradient(#f6f6f6,#e2e2e2 50%,#cfcfcf 51%,#dcdcdc)"></div>
<div class="t" style="left:518.5px;top:582.3px;font-size:12px;color:#222;transform:translateX(-50%);">Copy</div>
<div class="a" style="left:549px;top:577px;width:71px;height:21px;border:1px solid #a4a4a4;border-radius:2px;background:linear-gradient(#f6f6f6,#e2e2e2 50%,#cfcfcf 51%,#dcdcdc)"></div>
<div class="t" style="left:584.5px;top:582.3px;font-size:12px;color:#222;transform:translateX(-50%);">Delete all</div>
<div class="a" style="left:627px;top:577px;width:80px;height:21px;border:1px solid #a4a4a4;border-radius:2px;background:linear-gradient(#f6f6f6,#e2e2e2 50%,#cfcfcf 51%,#dcdcdc)"></div>
<div class="t" style="left:667.0px;top:582.3px;font-size:12px;color:#222;transform:translateX(-50%);">Import DXF</div>
<div class="a" style="left:286px;top:602px;width:226px;height:226px;background:#e2e2e2;border:1px solid #a8a8a8"></div>
<div class="a" style="left:287px;top:603px;width:224px;height:26px;background:linear-gradient(#606060,#2a2a2a 48%,#0a0a0a 52%,#2e2e2e)"></div>
<div class="a" style="left:311px;top:603px;width:1px;height:26px;background:#6a6a6a"></div>
<div class="a" style="left:411px;top:603px;width:1px;height:26px;background:#6a6a6a"></div>
<div class="t" style="left:316px;top:610.8px;font-size:12px;color:#fff;">Name</div>
<div class="t" style="left:416px;top:610.8px;font-size:12px;color:#fff;">Type</div>
<svg class="a" style="left:397px;top:609px" width="10" height="10"><path d="M0 1H9L5.5 4.5V9H3.5V4.5Z" fill="#ddd"/></svg>
<svg class="a" style="left:498px;top:609px" width="10" height="10"><path d="M0 1H9L5.5 4.5V9H3.5V4.5Z" fill="#ddd"/></svg>
<div class="a" style="left:287px;top:629px;width:224px;height:25px;background:#e6e6e6;border-bottom:1px solid #c8c8c8"></div>
<svg class="a" style="left:297px;top:638.5px" width="8" height="6"><path d="M1 5L4 1.5L7 5" fill="none" stroke="#333" stroke-width="1.6"/></svg>
<div class="t" style="left:311.5px;top:635.8px;font-size:12px;color:#333;">Model</div>
<div class="a" style="left:311px;top:654.5px;width:200px;height:25px;background:#fff;border-bottom:1px solid #dcdcdc;border-left:1px solid #d0d0d0"></div>
<div class="a" style="left:411px;top:654.5px;width:1px;height:25px;background:#dcdcdc"></div>
<div class="t" style="left:316px;top:661.3px;font-size:12px;color:#333;">W1</div>
<div class="t" style="left:416px;top:661.3px;font-size:12px;color:#333;">Wall</div>
<div class="a" style="left:311px;top:679.5px;width:200px;height:25px;background:#fff;border-bottom:1px solid #dcdcdc;border-left:1px solid #d0d0d0"></div>
<div class="a" style="left:411px;top:679.5px;width:1px;height:25px;background:#dcdcdc"></div>
<div class="a" style="left:312px;top:680.5px;width:99px;height:23px;background:linear-gradient(#ffedc8,#ffd48e);border:1px solid #f4cf80"></div>
<div class="a" style="left:413px;top:680.5px;width:96px;height:23px;background:linear-gradient(#ffedc8,#ffd48e);border:1px solid #e0b060"></div>
<div class="t" style="left:316px;top:686.3px;font-size:12px;color:#333;">O1</div>
<div class="t" style="left:416px;top:686.3px;font-size:12px;color:#333;">Opening</div>
<div class="a" style="left:311px;top:704.5px;width:200px;height:25px;background:#fff;border-bottom:1px solid #dcdcdc;border-left:1px solid #d0d0d0"></div>
<div class="a" style="left:411px;top:704.5px;width:1px;height:25px;background:#dcdcdc"></div>
<div class="t" style="left:316px;top:711.3px;font-size:12px;color:#333;">O2</div>
<div class="t" style="left:416px;top:711.3px;font-size:12px;color:#333;">Opening</div>
<div class="a" style="left:287px;top:729px;width:224px;height:25px;background:#e6e6e6;border-bottom:1px solid #c8c8c8"></div>
<svg class="a" style="left:297px;top:738.5px" width="8" height="6"><path d="M1 5L4 1.5L7 5" fill="none" stroke="#333" stroke-width="1.6"/></svg>
<div class="t" style="left:311.5px;top:735.8px;font-size:12px;color:#333;">Supports</div>
<div class="a" style="left:311px;top:754.5px;width:200px;height:25px;background:#fff;border-bottom:1px solid #dcdcdc;border-left:1px solid #d0d0d0"></div>
<div class="a" style="left:411px;top:754.5px;width:1px;height:25px;background:#dcdcdc"></div>
<div class="t" style="left:316px;top:761.3px;font-size:12px;color:#333;">LS1</div>
<div class="t" style="left:416px;top:761.3px;font-size:12px;color:#333;">Line support</div>
<div class="a" style="left:311px;top:779.5px;width:200px;height:25px;background:#fff;border-bottom:1px solid #dcdcdc;border-left:1px solid #d0d0d0"></div>
<div class="a" style="left:411px;top:779.5px;width:1px;height:25px;background:#dcdcdc"></div>
<div class="t" style="left:316px;top:786.3px;font-size:12px;color:#333;">LS2</div>
<div class="t" style="left:416px;top:786.3px;font-size:12px;color:#333;">Line support</div>
<div class="a" style="left:311px;top:804.5px;width:200px;height:25px;background:#fff;border-bottom:1px solid #dcdcdc;border-left:1px solid #d0d0d0"></div>
<div class="a" style="left:411px;top:804.5px;width:1px;height:25px;background:#dcdcdc"></div>
<div class="t" style="left:316px;top:811.3px;font-size:12px;color:#333;">LS3</div>
<div class="t" style="left:416px;top:811.3px;font-size:12px;color:#333;">Line support</div>
<div class="a" style="left:518px;top:602px;width:301px;height:259px;background:#e4e4e4;border:1px solid #b4b4b4;border-bottom:none"></div>
<div class="a" style="left:519px;top:602px;width:299px;height:27px;background:linear-gradient(#ececec,#dedede);border-bottom:1px solid #b8b8b8;border-top:1px solid #c8c8c8"></div>
<div class="t" style="left:552px;top:609.8px;font-size:12px;color:#555;">Opening</div>
<div class="a" style="left:542px;top:629.2px;width:276px;height:26px;background:#fff;border-left:1px solid #c0c0c0"></div>
<div class="t" style="left:553px;top:636.5px;font-size:12px;color:#333;">Shape</div>
<div class="a" style="left:659px;top:630.7px;width:157px;height:23px;border:1px solid #b0b0b0;background:linear-gradient(#f6f6f6,#e0e0e0 50%,#cbcbcb 51%,#dedede)"></div>
<svg class="a" style="left:806px;top:640.2px" width="5" height="4"><path d="M0 0H5L2.5 3Z" fill="#222"/></svg>
<div class="t" style="left:663px;top:636.5px;font-size:12px;color:#333;">Rectangular</div>
<div class="a" style="left:542px;top:654.4px;width:276px;height:26px;background:#fff;border-left:1px solid #c0c0c0"></div>
<div class="t" style="left:553px;top:661.7px;font-size:12px;color:#333;">W - Width [m]</div>
<div class="a" style="left:659px;top:655.9px;width:157px;height:23px;border:1px solid #b8b8b8;background:#fff"></div>
<div class="t" style="left:663px;top:661.7px;font-size:12px;color:#333;">1.50</div>
<div class="a" style="left:542px;top:680.2px;width:276px;height:26px;background:#fff;border-left:1px solid #c0c0c0"></div>
<div class="t" style="left:553px;top:687.5px;font-size:12px;color:#333;">H - Height [m]</div>
<div class="a" style="left:659px;top:681.7px;width:157px;height:23px;border:1px solid #b8b8b8;background:#fff"></div>
<div class="t" style="left:663px;top:687.5px;font-size:12px;color:#333;">1.00</div>
<div class="a" style="left:519px;top:706px;width:299px;height:26px;background:linear-gradient(#ececec,#dedede);border-bottom:1px solid #b8b8b8;border-top:1px solid #c8c8c8"></div>
<div class="t" style="left:552px;top:713.3px;font-size:12px;color:#555;">Position</div>
<div class="a" style="left:542px;top:733px;width:276px;height:26px;background:#fff;border-left:1px solid #c0c0c0"></div>
<div class="t" style="left:553px;top:740.3px;font-size:12px;color:#333;">M - Master</div>
<div class="a" style="left:659px;top:734.5px;width:157px;height:23px;border:1px solid #b0b0b0;background:linear-gradient(#f6f6f6,#e0e0e0 50%,#cbcbcb 51%,#dedede)"></div>
<svg class="a" style="left:806px;top:744px" width="5" height="4"><path d="M0 0H5L2.5 3Z" fill="#222"/></svg>
<div class="t" style="left:663px;top:740.3px;font-size:12px;color:#333;">W1</div>
<div class="a" style="left:542px;top:758.4px;width:276px;height:26px;background:#fff;border-left:1px solid #c0c0c0"></div>
<div class="t" style="left:553px;top:765.7px;font-size:12px;color:#333;">MP - Master point</div>
<div class="a" style="left:659px;top:759.9px;width:157px;height:23px;border:1px solid #b0b0b0;background:linear-gradient(#f6f6f6,#e0e0e0 50%,#cbcbcb 51%,#dedede)"></div>
<svg class="a" style="left:806px;top:769.4px" width="5" height="4"><path d="M0 0H5L2.5 3Z" fill="#222"/></svg>
<div class="t" style="left:663px;top:765.7px;font-size:12px;color:#333;">1</div>
<div class="a" style="left:542px;top:784.2px;width:276px;height:26px;background:#fff;border-left:1px solid #c0c0c0"></div>
<div class="t" style="left:553px;top:791.5px;font-size:12px;color:#333;">IP - Insert point</div>
<div class="a" style="left:659px;top:785.7px;width:157px;height:23px;border:1px solid #b0b0b0;background:linear-gradient(#f6f6f6,#e0e0e0 50%,#cbcbcb 51%,#dedede)"></div>
<svg class="a" style="left:806px;top:795.2px" width="5" height="4"><path d="M0 0H5L2.5 3Z" fill="#222"/></svg>
<div class="t" style="left:663px;top:791.5px;font-size:12px;color:#333;">1</div>
<div class="a" style="left:542px;top:809.7px;width:276px;height:26px;background:#fff;border-left:1px solid #c0c0c0"></div>
<div class="t" style="left:553px;top:817.0px;font-size:12px;color:#333;">X - position [m]</div>
<div class="a" style="left:659px;top:811.2px;width:157px;height:23px;border:1px solid #b8b8b8;background:#fff"></div>
<div class="t" style="left:663px;top:817.0px;font-size:12px;color:#333;">0.50</div>
<div class="a" style="left:542px;top:835px;width:276px;height:26px;background:#fff;border-left:1px solid #c0c0c0"></div>
<div class="t" style="left:553px;top:842.3px;font-size:12px;color:#333;">Z - position [m]</div>
<div class="a" style="left:659px;top:836.5px;width:157px;height:23px;border:1px solid #b8b8b8;background:#fff"></div>
<div class="t" style="left:663px;top:842.3px;font-size:12px;color:#333;">1.00</div>
<svg class="a" style="left:943px;top:186px" width="968" height="964" viewBox="943 186 968 964" font-family="Liberation Sans"><path d="M986.5 317.5V938" stroke="#bdbdbd" stroke-width="1" stroke-dasharray="1.5 2.4"/><path d="M1134.1 317.5V938" stroke="#bdbdbd" stroke-width="1" stroke-dasharray="1.5 2.4"/><path d="M1207.9 317.5V938" stroke="#bcbcbc" stroke-width="1" stroke-dasharray="11 5 1 5"/><path d="M1281.7 317.5V938" stroke="#bdbdbd" stroke-width="1" stroke-dasharray="1.5 2.4"/><path d="M1355.6 317.5V938" stroke="#bcbcbc" stroke-width="1" stroke-dasharray="11 5 1 5"/><path d="M1429.4 317.5V938" stroke="#bdbdbd" stroke-width="1" stroke-dasharray="1.5 2.4"/><path d="M1503.2 317.5V938" stroke="#bcbcbc" stroke-width="1" stroke-dasharray="11 5 1 5"/><path d="M1577.0 317.5V938" stroke="#bdbdbd" stroke-width="1" stroke-dasharray="1.5 2.4"/><path d="M1650.8 317.5V938" stroke="#bcbcbc" stroke-width="1" stroke-dasharray="11 5 1 5"/><path d="M1724.6 317.5V938" stroke="#bdbdbd" stroke-width="1" stroke-dasharray="1.5 2.4"/><path d="M1798.4 317.5V938" stroke="#bcbcbc" stroke-width="1" stroke-dasharray="11 5 1 5"/><path d="M1872.3 317.5V938" stroke="#bdbdbd" stroke-width="1" stroke-dasharray="1.5 2.4"/><path d="M971 923.5H1888" stroke="#bdbdbd" stroke-width="1" stroke-dasharray="1.5 2.4"/><path d="M971 775.9H1888" stroke="#bdbdbd" stroke-width="1" stroke-dasharray="1.5 2.4"/><path d="M971 702.1H1888" stroke="#bcbcbc" stroke-width="1" stroke-dasharray="11 5 1 5"/><path d="M971 628.3H1888" stroke="#bdbdbd" stroke-width="1" stroke-dasharray="1.5 2.4"/><path d="M971 554.4H1888" stroke="#bcbcbc" stroke-width="1" stroke-dasharray="11 5 1 5"/><path d="M971 480.6H1888" stroke="#bdbdbd" stroke-width="1" stroke-dasharray="1.5 2.4"/><path d="M971 406.8H1888" stroke="#bcbcbc" stroke-width="1" stroke-dasharray="11 5 1 5"/><path d="M971 333.0H1888" stroke="#bdbdbd" stroke-width="1" stroke-dasharray="1.5 2.4"/><text x="1060.3" y="947.5" font-size="10.5" fill="#222" text-anchor="middle" letter-spacing="-0.3">0.00</text><text x="1207.9" y="947.5" font-size="10.5" fill="#222" text-anchor="middle" letter-spacing="-0.3">1.00</text><text x="1355.6" y="947.5" font-size="10.5" fill="#222" text-anchor="middle" letter-spacing="-0.3">2.00</text><text x="1503.2" y="947.5" font-size="10.5" fill="#222" text-anchor="middle" letter-spacing="-0.3">3.00</text><text x="1650.8" y="947.5" font-size="10.5" fill="#222" text-anchor="middle" letter-spacing="-0.3">4.00</text><text x="1798.4" y="947.5" font-size="10.5" fill="#222" text-anchor="middle" letter-spacing="-0.3">5.00</text><text x="972" y="853.5" font-size="10.5" fill="#222" text-anchor="end" letter-spacing="-0.3">0.00</text><path d="M972 849.7H984" stroke="#c4c4c4" stroke-width="1"/><text x="972" y="705.9" font-size="10.5" fill="#222" text-anchor="end" letter-spacing="-0.3">1.00</text><path d="M972 702.1H984" stroke="#c4c4c4" stroke-width="1"/><text x="972" y="558.2" font-size="10.5" fill="#222" text-anchor="end" letter-spacing="-0.3">2.00</text><path d="M972 554.4H984" stroke="#c4c4c4" stroke-width="1"/><text x="972" y="410.6" font-size="10.5" fill="#222" text-anchor="end" letter-spacing="-0.3">3.00</text><path d="M972 406.8H984" stroke="#c4c4c4" stroke-width="1"/><path d="M1060.3 849.7V406.8H1798.4V849.7H1650.8V554.4H1503.2V849.7Z M1134.1 554.4V702.1H1355.6V554.4Z" fill="#c8c8c8" fill-rule="evenodd"/><path d="M1496.9 838.5V475.5" stroke="#aa2d33" stroke-width="3" stroke-opacity="0.92"/><path d="M1656.2 838.5V475.5" stroke="#aa2d33" stroke-width="1.8" stroke-opacity="0.92"/><path d="M1444.1 549.6H1709.9M1445.6 601L1550 497M1604.3 497L1708.7 601" stroke="#aa2d33" stroke-width="1.9" stroke-opacity="0.92" fill="none"/><path d="M1064.1 827.6H1498.8M1655.2 827.6H1794.8M1064.1 805.4H1498.8M1655.2 805.4H1794.8M1064.1 783.3H1498.8M1655.2 783.3H1794.8M1064.1 761.1H1498.8M1655.2 761.1H1794.8M1064.1 739.0H1498.8M1655.2 739.0H1794.8M1064.1 716.8H1498.8M1655.2 716.8H1794.8M1064.1 694.7H1129.7M1360.0 694.7H1498.8M1655.2 694.7H1794.8M1064.1 672.5H1129.7M1360.0 672.5H1498.8M1655.2 672.5H1794.8M1064.1 650.4H1129.7M1360.0 650.4H1498.8M1655.2 650.4H1794.8M1064.1 628.3H1129.7M1360.0 628.3H1498.8M1655.2 628.3H1794.8M1064.1 606.1H1129.7M1360.0 606.1H1498.8M1655.2 606.1H1794.8M1064.1 584.0H1129.7M1360.0 584.0H1498.8M1655.2 584.0H1794.8M1064.1 561.8H1129.7M1360.0 561.8H1498.8M1655.2 561.8H1794.8M1064.1 539.7H1794.8M1064.1 517.5H1794.8M1064.1 495.4H1794.8M1064.1 473.2H1794.8M1064.1 451.1H1794.8M1064.1 429.0H1794.8M1064.1 412.0H1794.8M1075.1 412.0V844.5M1097.2 412.0V844.5M1119.4 412.0V844.5M1141.5 412.0V550.0M1141.5 706.5V844.5M1163.6 412.0V550.0M1163.6 706.5V844.5M1185.8 412.0V550.0M1185.8 706.5V844.5M1207.9 412.0V550.0M1207.9 706.5V844.5M1230.1 412.0V550.0M1230.1 706.5V844.5M1252.2 412.0V550.0M1252.2 706.5V844.5M1274.4 412.0V550.0M1274.4 706.5V844.5M1296.5 412.0V550.0M1296.5 706.5V844.5M1318.7 412.0V550.0M1318.7 706.5V844.5M1340.8 412.0V550.0M1340.8 706.5V844.5M1362.9 412.0V844.5M1385.1 412.0V844.5M1407.2 412.0V844.5M1429.4 412.0V844.5M1451.5 412.0V844.5M1473.7 412.0V844.5M1495.8 412.0V475.5M1518.0 412.0V550.0M1540.1 412.0V550.0M1562.2 412.0V550.0M1584.4 412.0V550.0M1606.5 412.0V550.0M1628.7 412.0V550.0M1650.8 412.0V550.0M1673.0 412.0V844.5M1695.1 412.0V844.5M1717.3 412.0V844.5M1739.4 412.0V844.5M1761.5 412.0V844.5M1783.7 412.0V844.5M1064.1 844.5H1490.9Q1496.9 844.5 1496.9 838.5M1794.8 844.5H1662.2Q1656.2 844.5 1656.2 838.5M1082.4 549.6H1407.2M1082.4 706.9H1407.2M1129.2 502.8V753.7M1360.4 502.8V753.7M1082.4 542.2H1407.2M1082.4 714.3H1407.2M1121.9 502.8V753.7M1367.8 502.8V753.7M1086.6 584.7L1164.7 506.0M1403.1 584.7L1325.0 506.0M1091.2 590.3L1169.8 511.7M1398.5 590.3L1319.9 511.7M1086.0 671.5L1164.7 749.8M1403.7 671.5L1325.0 749.8M1091.2 666.0L1169.8 744.7M1398.5 666.0L1319.9 744.7" stroke="#aa2d33" stroke-width="1.3" fill="none" stroke-opacity="0.92"/><path d="M1503.2 849.7H1060.3V406.8H1798.4V849.7H1650.8" fill="none" stroke="#111" stroke-width="2.2"/><path d="M1060.3 849.7V406.8H1798.4V849.7" fill="none" stroke="#7a7a7a" stroke-width="2.2" stroke-dasharray="5 11" stroke-dashoffset="3"/><path d="M1503.2 849.7V554.4H1650.8V849.7" fill="none" stroke="#111" stroke-width="2.6"/><rect x="1134.1" y="554.4" width="221.4" height="147.6" fill="none" stroke="#b8703c" stroke-width="2.2"/><rect x="1134.1" y="554.4" width="221.4" height="147.6" fill="none" stroke="#ff7a10" stroke-width="2.2" stroke-dasharray="10 12"/><path d="M1060.3 324V938" stroke="#222" stroke-width="1.2" stroke-dasharray="11 5 1 5"/><path d="M975 849.7H1884" stroke="#333" stroke-width="1.2" stroke-dasharray="11 5 1 5"/><path d="M1060.3 304L1056.7 323H1063.9Z" fill="#111"/><text x="1060.3" y="300" font-size="13" fill="#222" text-anchor="middle">z</text><path d="M1900.5 849.7L1882 845.2V854.2Z" fill="#111"/><text x="1905" y="849.5" font-size="13" fill="#222" text-anchor="middle">x</text><circle cx="1060.3" cy="406.8" r="4" fill="none" stroke="#8c8c8c" stroke-width="1.1"/><circle cx="1429.4" cy="406.8" r="4" fill="none" stroke="#8c8c8c" stroke-width="1.1"/><circle cx="1798.4" cy="406.8" r="4" fill="none" stroke="#8c8c8c" stroke-width="1.1"/><circle cx="1060.3" cy="628.3" r="4" fill="none" stroke="#8c8c8c" stroke-width="1.1"/><circle cx="1798.4" cy="628.3" r="4" fill="none" stroke="#8c8c8c" stroke-width="1.1"/><circle cx="1429.4" cy="849.7" r="4" fill="none" stroke="#8c8c8c" stroke-width="1.1"/><circle cx="1798.4" cy="849.7" r="4" fill="none" stroke="#8c8c8c" stroke-width="1.1"/><circle cx="1429.4" cy="628.3" r="4" fill="none" stroke="#8c8c8c" stroke-width="1.1"/><circle cx="1134.1" cy="554.4" r="4" fill="none" stroke="#8c8c8c" stroke-width="1.1"/><circle cx="1244.8" cy="554.4" r="4" fill="none" stroke="#8c8c8c" stroke-width="1.1"/><circle cx="1355.6" cy="554.4" r="4" fill="none" stroke="#8c8c8c" stroke-width="1.1"/><circle cx="1134.1" cy="628.3" r="4" fill="none" stroke="#8c8c8c" stroke-width="1.1"/><circle cx="1355.6" cy="628.3" r="4" fill="none" stroke="#8c8c8c" stroke-width="1.1"/><circle cx="1244.8" cy="702.1" r="4" fill="none" stroke="#8c8c8c" stroke-width="1.1"/><circle cx="1355.6" cy="702.1" r="4" fill="none" stroke="#8c8c8c" stroke-width="1.1"/><circle cx="1244.8" cy="628.3" r="4" fill="none" stroke="#8c8c8c" stroke-width="1.1"/><circle cx="1060.3" cy="849.7" r="4.5" fill="none" stroke="#f07a1a" stroke-width="1.8"/><circle cx="1134.1" cy="702.1" r="4.5" fill="none" stroke="#f07a1a" stroke-width="1.8"/><text x="1060.5" y="423.8" font-size="16.5" fill="#747474" text-anchor="start">4</text><text x="1425.7" y="423.8" font-size="16.5" fill="#747474" text-anchor="start">7</text><text x="1788.3" y="423.8" font-size="16.5" fill="#747474" text-anchor="start">3</text><text x="1061.0" y="635.0" font-size="16.5" fill="#747474" text-anchor="start">8</text><text x="1788.3" y="635.0" font-size="16.5" fill="#747474" text-anchor="start">6</text><text x="1425.7" y="844.9" font-size="16.5" fill="#747474" text-anchor="start">5</text><text x="1788.5" y="844.9" font-size="16.5" fill="#747474" text-anchor="start">2</text><text x="1062.4" y="843.5" font-size="16.5" fill="#f07a1a" text-anchor="start">1</text><text x="1414.0" y="623.6" font-size="16.5" fill="#747474" text-anchor="start">0=9</text><text x="1135.3" y="571.8" font-size="16.5" fill="#747474" text-anchor="start">4</text><text x="1240.6" y="572.0" font-size="16.5" fill="#747474" text-anchor="start">7</text><text x="1345.8" y="572.0" font-size="16.5" fill="#747474" text-anchor="start">3</text><text x="1135.3" y="635.0" font-size="16.5" fill="#747474" text-anchor="start">8</text><text x="1345.8" y="635.0" font-size="16.5" fill="#747474" text-anchor="start">6</text><text x="1229.2" y="623.6" font-size="16.5" fill="#747474" text-anchor="start">0=9</text><text x="1136.2" y="696.1" font-size="16.5" fill="#f07a1a" text-anchor="start">1</text><text x="1240.6" y="696.0" font-size="16.5" fill="#747474" text-anchor="start">5</text><text x="1345.8" y="696.0" font-size="16.5" fill="#747474" text-anchor="start">2</text><path d="M1134.1 664.5H1355.6" stroke="#111" stroke-width="1.2" fill="none"/><path d="M1130.1 668.6L1138.1 660.3M1351.6 668.6L1359.6 660.3" stroke="#111" stroke-width="2" fill="none"/><text x="1244.8" y="658.5" font-size="13" fill="#222" text-anchor="middle">1.50</text><path d="M1318.2 554.4V702.1M1312 554.4H1331M1312 702.1H1331" stroke="#111" stroke-width="1.2" fill="none"/><path d="M1314 550.5L1322 558.5M1314 698.2L1322 706.2" stroke="#111" stroke-width="2" fill="none"/><text transform="translate(1313,627.5) rotate(-90)" font-size="13" fill="#222" text-anchor="middle">1.00</text><path d="M1097.9 702.1V849.7M1085 702.1H1105" stroke="#111" stroke-width="1.2" fill="none"/><path d="M1094 698L1102 706M1094 846L1102 854" stroke="#111" stroke-width="2" fill="none"/><text transform="translate(1093,771) rotate(-90)" font-size="13" fill="#222" text-anchor="middle">1.00</text><path d="M1060.3 887H1134.1M1134.1 868V893" stroke="#111" stroke-width="1.2" fill="none"/><path d="M1056.3 891L1064.3 883M1130.1 891L1138.1 883" stroke="#111" stroke-width="2" fill="none"/><text x="1097" y="882.5" font-size="13" fill="#222" text-anchor="middle">0.50</text><path d="M1134.1 849.7H1207.9M1399.8 849.7H1473.7M1650.8 849.7H1798.4" stroke="#12127a" stroke-width="2.2"/><path d="M1134.1 850.7L1124.6 862.4H1143.6Z" fill="none" stroke="#12127a" stroke-width="2"/><path d="M1134.1 872.2V885.7" stroke="#12127a" stroke-width="2"/><path d="M1134.1 868.2L1131.6 877.2H1136.6Z" fill="#12127a"/><path d="M1171.0 850.7L1161.5 862.4H1180.5Z" fill="none" stroke="#12127a" stroke-width="2"/><path d="M1171.0 872.2V885.7" stroke="#12127a" stroke-width="2"/><path d="M1171.0 868.2L1168.5 877.2H1173.5Z" fill="#12127a"/><path d="M1207.9 850.7L1198.4 862.4H1217.4Z" fill="none" stroke="#12127a" stroke-width="2"/><path d="M1207.9 872.2V885.7" stroke="#12127a" stroke-width="2"/><path d="M1207.9 868.2L1205.4 877.2H1210.4Z" fill="#12127a"/><path d="M1399.8 850.7L1390.3 862.4H1409.3Z" fill="none" stroke="#12127a" stroke-width="2"/><path d="M1389.8 865.3H1409.8" stroke="#12127a" stroke-width="2"/><path d="M1399.8 872.2V892.2" stroke="#12127a" stroke-width="2"/><path d="M1399.8 868.2L1397.3 877.2H1402.3Z" fill="#12127a"/><path d="M1436.8 850.7L1427.3 862.4H1446.3Z" fill="none" stroke="#12127a" stroke-width="2"/><path d="M1426.8 865.3H1446.8" stroke="#12127a" stroke-width="2"/><path d="M1436.8 872.2V892.2" stroke="#12127a" stroke-width="2"/><path d="M1436.8 868.2L1434.3 877.2H1439.3Z" fill="#12127a"/><path d="M1473.7 850.7L1464.2 862.4H1483.2Z" fill="none" stroke="#12127a" stroke-width="2"/><path d="M1463.7 865.3H1483.7" stroke="#12127a" stroke-width="2"/><path d="M1473.7 872.2V892.2" stroke="#12127a" stroke-width="2"/><path d="M1473.7 868.2L1471.2 877.2H1476.2Z" fill="#12127a"/><path d="M1650.8 850.7L1641.3 862.4H1660.3Z" fill="none" stroke="#12127a" stroke-width="2"/><path d="M1640.8 865.3H1660.8" stroke="#12127a" stroke-width="2"/><path d="M1650.8 872.2V892.2" stroke="#12127a" stroke-width="2"/><path d="M1650.8 868.2L1648.3 877.2H1653.3Z" fill="#12127a"/><path d="M1687.7 850.7L1678.2 862.4H1697.2Z" fill="none" stroke="#12127a" stroke-width="2"/><path d="M1677.7 865.3H1697.7" stroke="#12127a" stroke-width="2"/><path d="M1687.7 872.2V892.2" stroke="#12127a" stroke-width="2"/><path d="M1687.7 868.2L1685.2 877.2H1690.2Z" fill="#12127a"/><path d="M1724.6 850.7L1715.1 862.4H1734.1Z" fill="none" stroke="#12127a" stroke-width="2"/><path d="M1714.6 865.3H1734.6" stroke="#12127a" stroke-width="2"/><path d="M1724.6 872.2V892.2" stroke="#12127a" stroke-width="2"/><path d="M1724.6 868.2L1722.1 877.2H1727.1Z" fill="#12127a"/><path d="M1761.5 850.7L1752.0 862.4H1771.0Z" fill="none" stroke="#12127a" stroke-width="2"/><path d="M1751.5 865.3H1771.5" stroke="#12127a" stroke-width="2"/><path d="M1761.5 872.2V892.2" stroke="#12127a" stroke-width="2"/><path d="M1761.5 868.2L1759.0 877.2H1764.0Z" fill="#12127a"/><path d="M1798.4 850.7L1788.9 862.4H1807.9Z" fill="none" stroke="#12127a" stroke-width="2"/><path d="M1788.4 865.3H1808.4" stroke="#12127a" stroke-width="2"/><path d="M1798.4 872.2V892.2" stroke="#12127a" stroke-width="2"/><path d="M1798.4 868.2L1795.9 877.2H1800.9Z" fill="#12127a"/></svg>
</body></html>
